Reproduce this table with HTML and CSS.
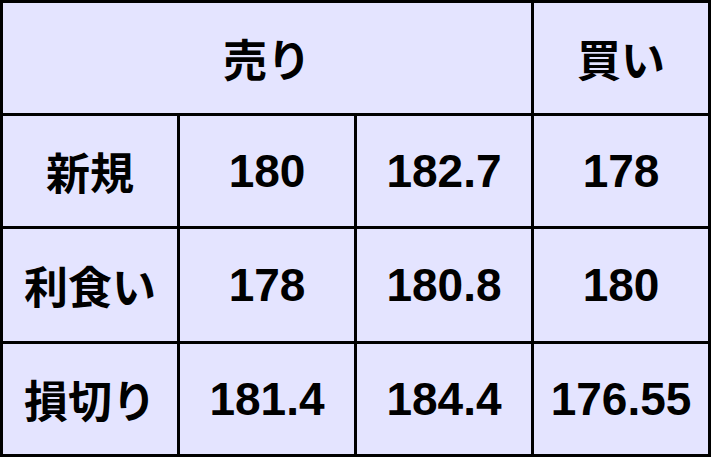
FILE: index.html
```html
<!DOCTYPE html>
<html lang="ja">
<head>
<meta charset="utf-8">
<link rel="stylesheet" href="styles.css">
</head>
<body>
<div class="table">
  <div class="cell head span3">売り</div>
  <div class="cell head">買い</div>
  <div class="cell label">新規</div>
  <div class="cell">180</div>
  <div class="cell">182.7</div>
  <div class="cell">178</div>
  <div class="cell label">利食い</div>
  <div class="cell">178</div>
  <div class="cell">180.8</div>
  <div class="cell">180</div>
  <div class="cell label">損切り</div>
  <div class="cell">181.4</div>
  <div class="cell">184.4</div>
  <div class="cell">176.55</div>
</div>
</body>
</html>
```
FILE: styles.css
```css
html, body {
  margin: 0;
  padding: 0;
  background: #e4e4ff;
}
.table {
  width: 711px;
  height: 457px;
  box-sizing: border-box;
  padding: 3px;
  background: #000;
  display: grid;
  grid-template-columns: 1fr 1fr 1fr 1fr;
  grid-template-rows: 110px 110px 112px 110px;
  gap: 3px;
}
.cell {
  background: #e4e4ff;
  display: flex;
  align-items: center;
  justify-content: center;
  font-family: "Liberation Sans", "Noto Sans CJK JP", sans-serif;
  font-weight: 700;
  font-size: 46px;
  color: #000;
  line-height: 1;
}
.span3 {
  grid-column: span 3;
}
.head, .label {
  font-family: "Noto Sans CJK JP", sans-serif;
  font-weight: 700;
  font-size: 44px;
}
```
